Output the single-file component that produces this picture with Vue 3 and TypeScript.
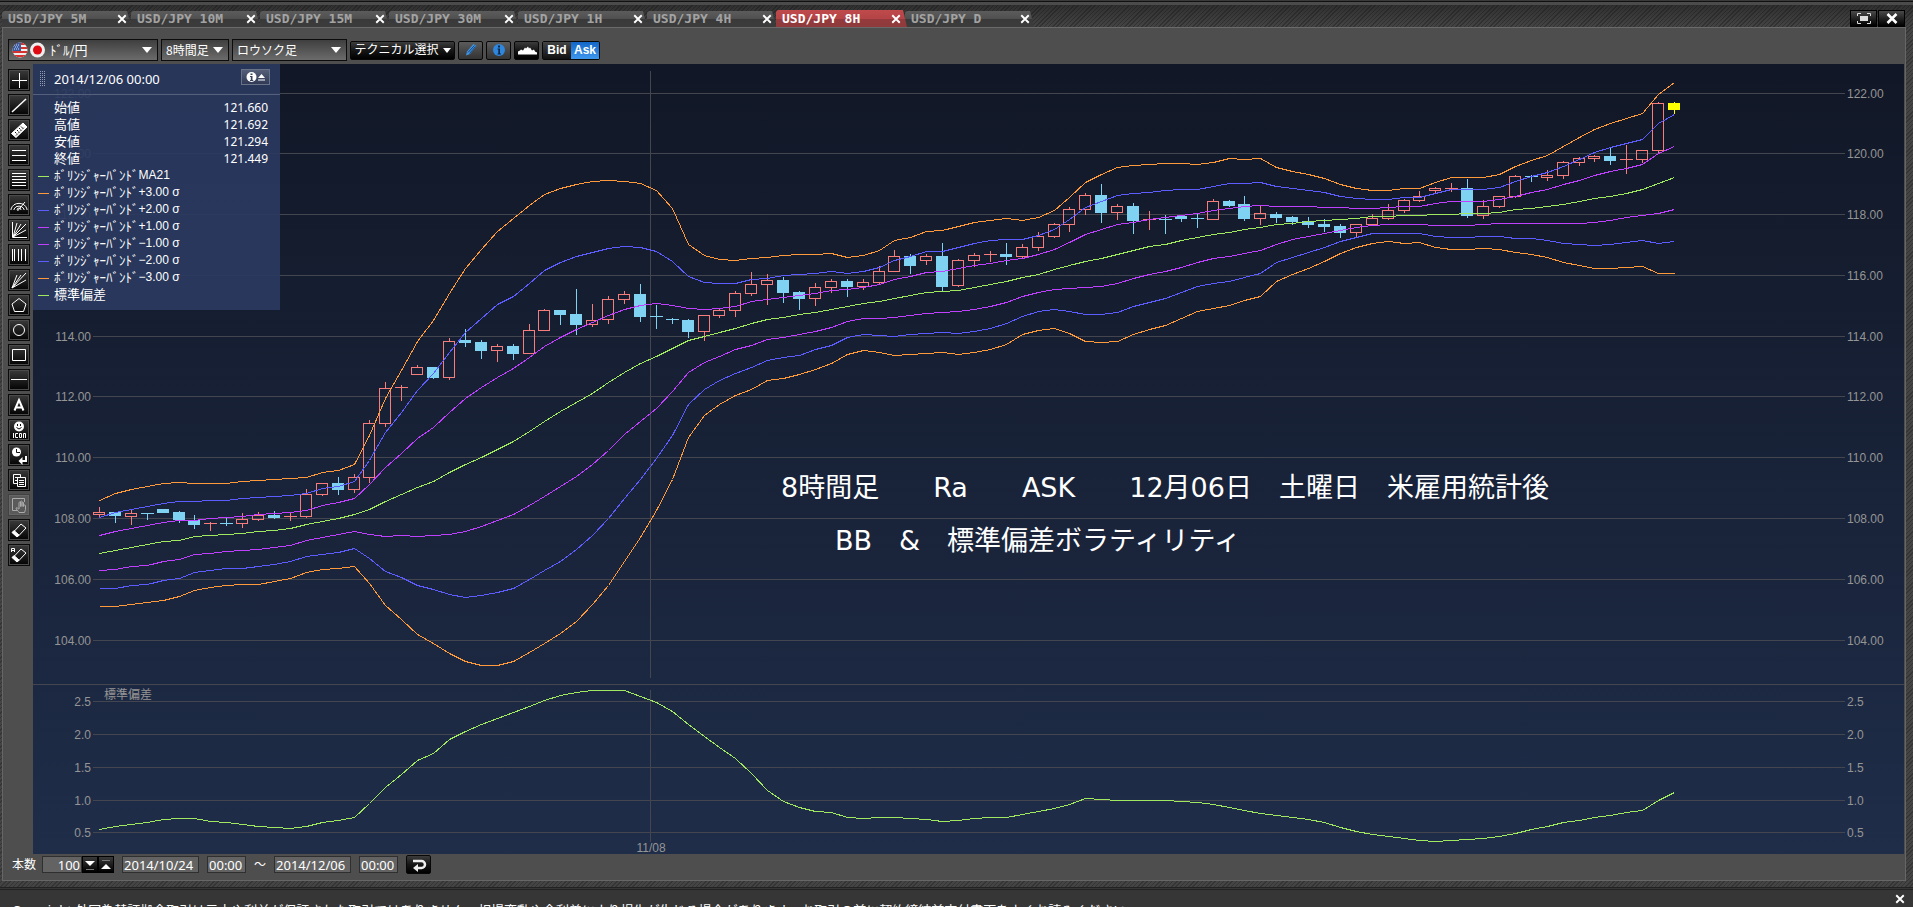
<script setup lang="ts">
import { computed, onBeforeUnmount, onMounted, ref } from 'vue'

type Kind = 'up' | 'down' | 'live'
type Bar = [Kind, number, number, number, number]

const tabs = ['5M', '10M', '15M', '30M', '1H', '4H', '8H', 'D']
const active = ref('8H')

const barCount = ref('100')
const fromDate = ref('2014/10/24')
const fromTime = ref('00:00')
const toDate = ref('2014/12/06')
const toTime = ref('00:00')

const quotes = [
  { name: '始値', value: '121.660' },
  { name: '高値', value: '121.692' },
  { name: '安値', value: '121.294' },
  { name: '終値', value: '121.449' },
]
const band = 'ﾎﾞﾘﾝｼﾞｬｰﾊﾞﾝﾄﾞ'
const legend = [
  { name: band, param: 'MA21', tone: 'green' },
  { name: band, param: '+3.00 σ', tone: 'orange' },
  { name: band, param: '+2.00 σ', tone: 'blue' },
  { name: band, param: '+1.00 σ', tone: 'purple' },
  { name: band, param: '−1.00 σ', tone: 'purple' },
  { name: band, param: '−2.00 σ', tone: 'blue' },
  { name: band, param: '−3.00 σ', tone: 'orange' },
  { name: '標準偏差', param: '', tone: 'green' },
]

const tools = [
  { id: 'cross', label: '十字線' }, { id: 'trend', label: 'トレンドライン' }, { id: 'ruler', label: '定規' },
  { id: 'three', label: '平行線' }, { id: 'five', label: 'リトレースメント' }, { id: 'arc', label: 'アーク' },
  { id: 'fan', label: 'ギャンファン' }, { id: 'vert', label: 'タイムゾーン' }, { id: 'rays', label: 'ファン' },
  { id: 'penta', label: '五角形' }, { id: 'circle', label: '円' }, { id: 'rect', label: '四角形' },
  { id: 'hline', label: '水平線' }, { id: 'text', label: 'テキスト' }, { id: 'icon', label: 'アイコン' },
  { id: 'clock', label: '時間' }, { id: 'copy', label: 'コピー' }, { id: 'hand', label: '移動' },
  { id: 'erase', label: '消去' }, { id: 'eraseAll', label: 'すべて消去' },
]

/* kind, body top, body bottom, high, low */
const bars: Bar[] = [
  ['up', 512, 515, 507, 517], ['down', 512, 516, 512, 523], ['up', 513, 517, 509, 525], ['down', 513, 514, 513, 520],
  ['down', 509, 513, 509, 513], ['down', 512, 520, 511, 523], ['down', 520, 525, 515, 529], ['up', 523, 524, 522, 531],
  ['down', 523, 524, 518, 526], ['up', 519, 524, 513, 528], ['up', 515, 520, 512, 521], ['down', 515, 518, 511, 519],
  ['up', 516, 517, 513, 521], ['up', 494, 517, 489, 518], ['up', 483, 495, 483, 496], ['down', 483, 490, 477, 495],
  ['up', 477, 490, 474, 493], ['up', 423, 478, 420, 483], ['up', 388, 424, 382, 427], ['up', 387, 388, 385, 401],
  ['up', 367, 375, 365, 375], ['down', 367, 378, 367, 379], ['up', 341, 378, 338, 380], ['down', 340, 343, 329, 347],
  ['down', 342, 351, 340, 359], ['up', 346, 351, 344, 362], ['down', 346, 354, 344, 360], ['up', 330, 354, 324, 354],
  ['up', 310, 331, 309, 331], ['down', 310, 315, 310, 325], ['down', 314, 325, 289, 335], ['up', 320, 325, 304, 327],
  ['up', 299, 320, 296, 324], ['up', 294, 300, 291, 304], ['down', 294, 317, 284, 322], ['down', 316, 317, 305, 329],
  ['down', 319, 320, 318, 324], ['down', 320, 332, 319, 338], ['up', 315, 332, 315, 341], ['up', 310, 316, 308, 318],
  ['up', 293, 311, 291, 317], ['up', 284, 294, 272, 296], ['up', 280, 285, 274, 305], ['down', 280, 293, 277, 303],
  ['down', 292, 299, 291, 310], ['up', 287, 299, 283, 306], ['up', 281, 288, 279, 293], ['down', 281, 287, 279, 297],
  ['up', 282, 287, 279, 290], ['up', 271, 283, 266, 284], ['up', 256, 272, 250, 272], ['down', 256, 266, 254, 274],
  ['up', 256, 261, 254, 265], ['down', 256, 287, 243, 291], ['up', 260, 286, 259, 287], ['up', 255, 261, 253, 267],
  ['up', 254, 255, 251, 262], ['down', 254, 257, 243, 265], ['up', 247, 257, 244, 258], ['up', 236, 248, 232, 251],
  ['up', 224, 237, 223, 238], ['up', 209, 225, 207, 232], ['up', 195, 210, 193, 215], ['down', 195, 213, 184, 223],
  ['up', 206, 213, 204, 220], ['down', 206, 221, 203, 234], ['up', 219, 220, 211, 230], ['down', 219, 220, 215, 234],
  ['down', 216, 219, 216, 222], ['down', 218, 219, 214, 228], ['up', 201, 220, 199, 220], ['down', 201, 206, 200, 207],
  ['down', 204, 219, 196, 221], ['up', 213, 219, 205, 225], ['down', 214, 218, 212, 223], ['down', 217, 222, 216, 225],
  ['down', 221, 225, 217, 228], ['down', 224, 227, 219, 232], ['down', 226, 233, 224, 238], ['up', 224, 233, 224, 238],
  ['up', 218, 225, 214, 225], ['up', 210, 219, 204, 220], ['up', 200, 211, 199, 213], ['up', 196, 201, 191, 202],
  ['up', 188, 191, 187, 193], ['up', 188, 189, 183, 192], ['down', 188, 216, 179, 218], ['up', 206, 216, 200, 219],
  ['up', 196, 207, 196, 208], ['up', 176, 197, 175, 198], ['down', 176, 177, 175, 182], ['up', 175, 178, 170, 181],
  ['up', 162, 176, 161, 179], ['up', 158, 163, 157, 166], ['up', 156, 159, 155, 162], ['down', 156, 161, 148, 165],
  ['up', 159, 160, 145, 174], ['up', 150, 160, 150, 163], ['up', 103, 151, 102, 153], ['live', 103, 110, 102, 114],
]

const series: { tone: string; ys: number[] }[] = [
  { tone: 'orange', ys: [
    500, 493, 489, 486, 483, 482, 483, 483, 483, 481, 480, 479, 478, 477, 472, 470, 464, 435, 398, 370, 341, 320, 293, 268, 249,
    231, 218, 205, 194, 188, 184, 181, 180, 181, 183, 190, 208, 244, 255, 259, 260, 258, 257, 255, 254, 254, 253, 257, 255, 250,
    240, 237, 231, 230, 226, 222, 220, 218, 220, 217, 210, 197, 182, 174, 167, 165, 164, 163, 163, 164, 162, 158, 159, 158, 167,
    171, 174, 178, 184, 188, 190, 190, 188, 188, 182, 177, 177, 177, 174, 166, 160, 155, 146, 137, 129, 123, 118, 113, 94, 82] },
  { tone: 'blue', ys: [
    517, 512, 509, 506, 503, 501, 501, 500, 500, 498, 497, 496, 495, 493, 488, 486, 481, 460, 432, 412, 390, 373, 352, 332, 318,
    304, 296, 283, 270, 262, 256, 252, 248, 246, 247, 251, 261, 276, 282, 283, 283, 279, 278, 275, 274, 273, 271, 273, 271, 267,
    260, 256, 251, 251, 247, 243, 240, 239, 239, 235, 229, 219, 207, 201, 195, 193, 192, 190, 189, 189, 186, 183, 183, 182, 186,
    188, 190, 192, 196, 198, 199, 199, 197, 197, 193, 189, 189, 189, 187, 181, 176, 172, 166, 159, 152, 147, 143, 139, 123, 114] },
  { tone: 'purple', ys: [
    535, 531, 528, 525, 522, 520, 520, 518, 517, 516, 514, 513, 512, 510, 505, 502, 498, 484, 467, 453, 438, 427, 412, 398, 387,
    377, 368, 357, 346, 337, 329, 322, 315, 309, 305, 303, 305, 308, 309, 308, 306, 301, 299, 297, 295, 293, 290, 289, 287, 284,
    279, 276, 272, 271, 268, 265, 263, 260, 258, 254, 249, 242, 234, 229, 224, 222, 219, 217, 215, 213, 210, 208, 206, 205, 206,
    206, 206, 207, 207, 208, 208, 207, 206, 206, 203, 201, 201, 201, 199, 196, 192, 189, 184, 180, 175, 171, 168, 164, 153, 146] },
  { tone: 'green', ys: [
    553, 550, 547, 544, 541, 540, 536, 535, 534, 533, 531, 530, 528, 524, 521, 518, 514, 509, 501, 494, 487, 481, 472, 464, 457,
    449, 441, 431, 421, 411, 402, 393, 382, 372, 363, 356, 348, 340, 336, 332, 328, 323, 319, 317, 314, 312, 309, 306, 303, 301,
    298, 295, 292, 291, 290, 287, 284, 281, 277, 274, 269, 265, 261, 258, 254, 250, 246, 244, 240, 237, 234, 232, 229, 227, 224,
    223, 221, 220, 219, 218, 216, 216, 215, 215, 214, 214, 213, 213, 212, 209, 208, 206, 204, 201, 198, 196, 193, 189, 183, 177] },
  { tone: 'purple', ys: [
    570, 569, 566, 565, 561, 559, 554, 553, 551, 550, 549, 547, 545, 540, 537, 534, 531, 534, 536, 535, 536, 535, 534, 531, 526,
    520, 514, 505, 496, 486, 476, 464, 450, 434, 421, 408, 391, 372, 362, 356, 349, 345, 339, 337, 334, 331, 327, 321, 318, 318,
    317, 315, 313, 312, 311, 309, 306, 302, 296, 292, 289, 288, 287, 286, 283, 278, 274, 271, 267, 262, 258, 256, 253, 250, 244,
    239, 236, 233, 230, 227, 225, 224, 224, 224, 225, 225, 225, 224, 223, 223, 223, 223, 223, 223, 222, 220, 217, 215, 213, 209] },
  { tone: 'blue', ys: [
    588, 588, 585, 584, 580, 578, 572, 570, 568, 568, 566, 564, 561, 556, 554, 552, 548, 558, 571, 577, 585, 589, 594, 597, 595,
    592, 588, 579, 570, 561, 549, 535, 518, 498, 479, 458, 435, 404, 389, 380, 373, 367, 360, 357, 355, 349, 345, 337, 334, 335,
    336, 334, 333, 332, 333, 331, 328, 323, 316, 311, 309, 311, 314, 314, 312, 306, 302, 298, 292, 286, 283, 281, 277, 273, 262,
    257, 252, 247, 241, 237, 233, 233, 233, 233, 236, 237, 237, 236, 236, 238, 238, 240, 243, 244, 245, 244, 242, 240, 243, 241] },
  { tone: 'orange', ys: [
    606, 606, 604, 602, 600, 596, 590, 587, 585, 584, 584, 581, 578, 572, 569, 568, 566, 583, 605, 619, 634, 643, 653, 661, 665,
    665, 661, 652, 643, 633, 621, 604, 585, 561, 537, 510, 479, 437, 415, 404, 395, 389, 380, 378, 374, 369, 363, 354, 350, 352,
    355, 354, 353, 352, 354, 352, 349, 344, 334, 330, 328, 333, 341, 342, 341, 334, 329, 325, 318, 311, 308, 305, 300, 296, 281,
    274, 268, 261, 253, 247, 243, 241, 243, 242, 247, 249, 249, 248, 249, 252, 254, 257, 262, 265, 268, 268, 267, 266, 273, 273] },
  { tone: 'green', ys: [
    829, 826, 824, 822, 819, 818, 818, 821, 822, 824, 826, 827, 828, 826, 822, 820, 817, 803, 787, 774, 760, 753, 739, 731, 724,
    718, 712, 706, 700, 695, 692, 690, 690, 690, 696, 702, 711, 724, 736, 747, 758, 773, 790, 801, 807, 811, 812, 817, 818, 817,
    817, 818, 819, 821, 820, 818, 817, 817, 814, 811, 808, 804, 798, 799, 800, 800, 800, 800, 801, 802, 804, 807, 810, 813, 815,
    817, 819, 822, 827, 831, 834, 836, 838, 840, 841, 840, 839, 838, 836, 833, 829, 826, 822, 820, 817, 815, 812, 810, 800, 792] },
]

const priceLevels = [
  { text: '122.00', y: 93 }, { text: '120.00', y: 153 }, { text: '118.00', y: 214 }, { text: '116.00', y: 275 },
  { text: '114.00', y: 336 }, { text: '112.00', y: 396 }, { text: '110.00', y: 457 }, { text: '108.00', y: 518 },
  { text: '106.00', y: 579 }, { text: '104.00', y: 640 },
]
const deviationLevels = [
  { text: '2.5', y: 701 }, { text: '2.0', y: 734 }, { text: '1.5', y: 767 }, { text: '1.0', y: 800 }, { text: '0.5', y: 832 },
]
const levels = [...priceLevels, ...deviationLevels]

const chartLeft = 33
const chartTop = 64
const chartHeight = 790
const firstBar = 99
const chartBox = ref<HTMLElement | null>(null)
const chartWidth = ref(1871)
const axisX = computed(() => chartLeft + chartWidth.value - 59)
const step = computed(() => (axisX.value - firstBar - 171) / (bars.length - 1))
const barX = (i: number) => Math.round(firstBar + i * step.value)
const dayLine = computed(() => barX(34.64))
const points = (ys: number[]) => ys.map((y, i) => `${barX(i) + 0.5},${y + 0.5}`).join(' ')

let observer: ResizeObserver | undefined
onMounted(() => {
  observer = new ResizeObserver(([entry]) => {
    chartWidth.value = Math.round(entry.contentRect.width)
  })
  if (chartBox.value) observer.observe(chartBox.value)
})
onBeforeUnmount(() => observer?.disconnect())
</script>

<template>
  <div class="app">
    <header class="strip">
      <nav class="tabs">
        <div v-for="t in tabs" :key="t" class="tab" :class="{ on: t === active }">
          <button class="tab-name" type="button" @click="active = t">USD/JPY {{ t }}</button>
          <button class="tab-close" type="button" :aria-label="`USD/JPY ${t} を閉じる`">
            <svg viewBox="0 0 8 8"><path d="M1 1 7 7M7 1 1 7" /></svg>
          </button>
        </div>
      </nav>
      <div class="win">
        <button type="button" aria-label="最大化">
          <svg viewBox="0 0 14 11"><path d="M.5 3V.5H4M10 .5h3.5V3M13.5 8v2.500H10M4 10.500H.5V8" fill="none" stroke="#ddd" /><path d="M3 3h8v5H3z" fill="#ddd" /></svg>
        </button>
        <button type="button" aria-label="閉じる">
          <svg viewBox="0 0 14 11"><path d="M2.500 1 11.500 10M11.500 1 2.500 10" stroke="#fff" stroke-width="2.600" /></svg>
        </button>
      </div>
    </header>

    <main class="frame">
      <div class="bar">
        <label class="pick pair">
          <svg class="flags" viewBox="0 0 34 16" aria-hidden="true">
            <defs><clipPath id="disc"><circle cx="8" cy="8" r="7.500" /></clipPath></defs>
            <g clip-path="url(#disc)">
              <path d="M0 0h16v16H0z" fill="#f0eeee" />
              <path d="M0 1h16v2H0zM0 5h16v2H0zM0 9h16v2H0zM0 13h16v2H0z" fill="#d8322f" />
              <path d="M0 0h9v9H0z" fill="#3a5c9f" />
              <path d="M2 3h1M4 3h1M6 3h1M3 5h1M5 5h1M2 7h1M4 7h1M6 7h1" stroke="#cfd8ee" />
            </g>
            <circle cx="25.500" cy="8" r="7.500" fill="#eee" />
            <circle cx="25.500" cy="8" r="4.500" fill="#e00a12" />
          </svg>
          <select aria-label="通貨ペア"><option>ﾄﾞﾙ/円</option></select>
        </label>
        <label class="pick span"><select aria-label="足種"><option>8時間足</option></select></label>
        <label class="pick style"><select aria-label="チャート種類"><option>ロウソク足</option></select></label>
        <button class="dark tech" type="button">テクニカル選択<i class="arrow"></i></button>
        <button class="dark grey" type="button" aria-label="描画">
          <svg viewBox="0 0 16 16"><path d="M3 13.500 4 9.500 10.500 2l3 2L7 12z" fill="#3f96e6" /><path d="M5 10.500l6.500-7M6.500 11.500l6-7" stroke="#15457c" /></svg>
        </button>
        <button class="dark grey" type="button" aria-label="情報">
          <svg viewBox="0 0 16 16"><circle cx="8" cy="8" r="6" fill="#2f86dd" /><path d="M7 3.500h2v2H7zM6.500 6.500H9v5h1v1H6.500v-1h.8v-4h-.8z" fill="#10294a" /></svg>
        </button>
        <button class="dark" type="button" aria-label="エリア表示">
          <svg class="wide" viewBox="0 0 20 16"><path d="M1 12.500V9.500l2-1 1-1 2 1 2-3 1 1 2-2 1 2 1-1 2 3 2-1 1 2 2 1v2z" fill="#fff" /></svg>
        </button>
        <div class="side">
          <button type="button">Bid</button><button class="sel" type="button">Ask</button>
        </div>
      </div>

      <div class="work">
        <aside class="tools">
          <button v-for="t in tools" :key="t.id" type="button" :class="{ off: t.id === 'hand' }" :aria-label="t.label">
            <svg viewBox="0 0 22 22">
              <path v-if="t.id === 'cross'" d="M4 11.500h15M11.500 4v15" />
              <path v-else-if="t.id === 'trend'" d="M4 18 18 5" stroke-width="1.500" />
              <g v-else-if="t.id === 'ruler'">
                <path d="M3.500 14.500 15 4l4 4L8 18.500z" fill="#fff" />
                <path d="M7 13l1.500 1.500M9 11l1.500 1.500M11 9l1.500 1.500M13 7.500l1.500 1.500M8 16.500l8-8" stroke="#111" stroke-dasharray="2 1" />
              </g>
              <path v-else-if="t.id === 'three'" d="M4 6.500h14M4 11.500h14M4 16.500h14" />
              <path v-else-if="t.id === 'five'" d="M4 4.500h14M4 7.500h14M4 10.500h14M4 13.500h14M4 16.500h14" />
              <path v-else-if="t.id === 'arc'" d="M3 16v-1a8.500 8.500 0 0 1 16 0v1M6 16v-1a5.500 5 0 0 1 10 0v1M9 16a2 2 0 0 1 4 0M9.500 17 17 8" />
              <path v-else-if="t.id === 'fan'" d="M4.500 3v15.500H19M5 18 9 4M5 18l8-13M5 18 18 5M5 18l13-7" />
              <path v-else-if="t.id === 'vert'" d="M4.500 5v12M6.500 5v12M10.500 5v12M13.500 5v12M17.500 5v12" />
              <path v-else-if="t.id === 'rays'" d="M4 19 9 6M4 19 13 6M4 19 18 4M4 19l14-8" />
              <path v-else-if="t.id === 'penta'" d="M11 4.500 18 10l-2.500 7.500h-9L4 10z" />
              <circle v-else-if="t.id === 'circle'" cx="11" cy="11" r="5.500" />
              <path v-else-if="t.id === 'rect'" d="M4.500 5.500h13v11h-13z" />
              <path v-else-if="t.id === 'hline'" d="M3 10.500h16" />
              <path v-else-if="t.id === 'text'" d="M6.500 16.500 11 6l4.500 10.500M8 13.500h6" stroke-width="2" />
              <g v-else-if="t.id === 'icon'">
                <circle cx="11" cy="7.500" r="5" fill="#fff" stroke="none" />
                <path d="M9.500 5v2M12.500 5v2M8.500 8.500q2.500 3 5 0" stroke="#111" />
                <path d="M5.500 14v5M10 14.500H7.500v4H10M11.500 14.500h2v4h-2zM15.500 19v-4.500h2V19" />
              </g>
              <g v-else-if="t.id === 'clock'">
                <circle cx="8.500" cy="8" r="4.500" fill="#fff" stroke="none" />
                <path d="M8.500 5v3.500H12" stroke="#111" />
                <path d="M18 12v5h-5" stroke-width="2" /><path d="m14.500 13-4 4 4 4z" fill="#fff" stroke="none" />
              </g>
              <g v-else-if="t.id === 'copy'">
                <path d="M9 14.500H5.500v-9h7V9M7 8.500h4M7 11.500h2" /><path d="M9.500 8.500h8v9h-8zM11 11.500h5M11 13.500h5M11 15.500h5" />
              </g>
              <g v-else-if="t.id === 'hand'">
                <path d="M9 16.500H4.500v-12h12V8" /><path d="M11 18.500c-1-2-3-3-3-4.500 1-1 2 1 3 1V8.500q1-1 1.500 0v4-5q1-1 1.500 0v5-4q1-1 1.500 0v4q1-3 2-1v4l-1 3z" />
              </g>
              <g v-else>
                <path d="M5 13.500 13 5l5 4-8 8.500z" /><path d="M4 13.500 6 11.500l5 4.500-2 2z" fill="#fff" />
                <path v-if="t.id === 'eraseAll'" d="M3.500 8V4.500h3V8M3.500 6.500h3" />
              </g>
            </svg>
          </button>
        </aside>

        <section ref="chartBox" class="chart">
          <svg class="plot" :viewBox="`${chartLeft} ${chartTop} ${chartWidth} ${chartHeight}`">
            <g class="grid">
              <path v-for="l in levels" :key="l.text" :d="`M93 ${l.y + 0.5}H${axisX}`" />
              <path :d="`M${chartLeft} 684.500H${chartLeft + chartWidth}`" />
              <path :d="`M${dayLine + 0.5} 71V678M${dayLine + 0.5} 690V842`" />
            </g>
            <g class="axis">
              <template v-for="l in levels" :key="l.text">
                <text x="91" :y="l.y + 5" text-anchor="end">{{ l.text }}</text>
                <text :x="axisX + 2" :y="l.y + 5">{{ l.text }}</text>
              </template>
              <text :x="dayLine + 1" y="852" text-anchor="middle">11/08</text>
              <text class="jp" x="104" y="699">標準偏差</text>
            </g>
            <g class="note">
              <text x="781" y="497">8時間足　　Ra　　ASK　　12月06日　土曜日　米雇用統計後</text>
              <text x="835" y="550">BB　&amp;　標準偏差ボラティリティ</text>
            </g>
            <g v-for="(b, i) in bars" :key="i" :class="b[0]">
              <rect class="wick" :x="barX(i)" :y="b[3]" width="1" :height="b[1] - b[3]" />
              <rect class="wick" :x="barX(i)" :y="b[2]" width="1" :height="b[4] - b[2]" />
              <rect v-if="b[2] - b[1] === 1" class="wick" :x="barX(i) - 6" :y="b[1]" width="13" height="1" />
              <rect v-else-if="b[0] === 'up'" class="hollow" :x="barX(i) - 5.5" :y="b[1] + 0.5" width="11" :height="b[2] - b[1] - 1" />
              <rect v-else class="wick" :x="barX(i) - 6" :y="b[1]" width="12" :height="b[2] - b[1]" />
            </g>
            <polyline v-for="(s, i) in series" :key="i" class="curve" :class="s.tone" :points="points(s.ys)" />
          </svg>

          <div class="panel">
            <div class="panel-head">
              <span class="grip"></span>
              <time>2014/12/06 00:00</time>
              <button type="button" aria-label="情報を折りたたむ">
                <svg viewBox="0 0 20 12"><circle cx="5.500" cy="6" r="5" fill="#fff" /><path d="M4.500 2.500h2V4h-2zM4 5h2.500v4h.8v1H4V9h.8V6H4z" fill="#39435f" /><path d="m12 7 3.500-4L19 7zM12 8.500h7v1h-7z" fill="#fff" /></svg>
              </button>
            </div>
            <dl>
              <div v-for="q in quotes" :key="q.name" class="line"><dt>{{ q.name }}</dt><dd>{{ q.value }}</dd></div>
            </dl>
            <ul>
              <li v-for="l in legend" :key="l.param" class="line"><i :class="l.tone"></i>{{ l.name }}<span>{{ l.param }}</span></li>
            </ul>
          </div>
        </section>
      </div>

      <form class="range" @submit.prevent>
        <label for="count">本数</label>
        <div class="count">
          <input id="count" v-model="barCount" />
          <button type="button" aria-label="減らす"><svg viewBox="0 0 10 10"><path d="M0 1h10L5 6z" fill="#fff" /><path d="M1 9.500h8" stroke="#777" /></svg></button>
          <button type="button" aria-label="増やす"><svg viewBox="0 0 10 10"><path d="M0 9h10L5 4z" fill="#fff" /><path d="M1 .5h8" stroke="#777" /></svg></button>
        </div>
        <input v-model="fromDate" class="date" aria-label="開始日" />
        <input v-model="fromTime" class="time" aria-label="開始時刻" />
        <span class="tilde">～</span>
        <input v-model="toDate" class="date" aria-label="終了日" />
        <input v-model="toTime" class="time" aria-label="終了時刻" />
        <button class="dark apply" type="submit" aria-label="適用">
          <svg viewBox="0 0 16 14"><path d="M2 3h8.500a3 3 0 0 1 0 7H6" fill="none" stroke="#eee" stroke-width="2.500" /><path d="M7 6v8l-5-4z" fill="#eee" /></svg>
        </button>
      </form>
    </main>

    <footer class="foot">
      <p>Copyright 外国為替証拠金取引は元本や利益が保証された取引ではありません。相場変動や金利差により損失が生じる場合があります。お取引の前に契約締結前交付書面をよくお読みください。</p>
      <button type="button" aria-label="閉じる"><svg viewBox="0 0 8 8"><path d="M1 1 7 7M7 1 1 7" /></svg></button>
    </footer>
  </div>
</template>

<style>
body {
  margin: 0;
  background: #363636;
}
</style>

<style scoped>
.app {
  height: 100vh;
  overflow: hidden;
  display: flex;
  flex-direction: column;
  box-sizing: border-box;
  background: repeating-linear-gradient(135deg, #353535 0 1px, #444 1px 3px);
  color: #fff;
  font: 12px/1 "Noto Sans", "Noto Sans CJK JP", sans-serif;
}
* {
  box-sizing: border-box;
}
button {
  padding: 0;
  border: 0;
  background: none;
  color: inherit;
  font: inherit;
}
svg {
  display: block;
}
.strip {
  flex: none;
  display: flex;
  justify-content: space-between;
  align-items: flex-end;
  height: 27px;
  padding: 0 8px 0 2px;
  border-top: 1px solid #3a3a3a;
  background:
    linear-gradient(#111 0 1px, #4b4b4b 1px 4px, transparent 4px),
    linear-gradient(rgba(20, 20, 20, .5), transparent),
    repeating-linear-gradient(135deg, #333 0 1px, #444 1px 3px);
}
.tabs {
  display: flex;
}
.tab {
  position: relative;
  display: flex;
  align-items: center;
  width: 129px;
  height: 16px;
  margin-top: 1px;
  padding-left: 6px;
  color: #a3a3a3;
  background: linear-gradient(#5c5c5c, #4f4f4f 50%, #393939 50%, #3c3c3c);
  border-radius: 3px 0 0 0;
  clip-path: polygon(0 0, calc(100% - 4px) 0, 100% 100%, 0 100%);
}
.tab.on {
  width: 131px;
  height: 17px;
  margin: 0 -2px 0 0;
  color: #fff;
  background: linear-gradient(#c04a4c, #b44446 50%, #963a3c 50%, #8e3a3c);
  z-index: 1;
}
.tab-name {
  font: bold 13px/16px "DejaVu Sans Mono", monospace;
  white-space: pre;
}
.tab-close {
  position: absolute;
  right: 4px;
  top: 3px;
  width: 10px;
  height: 10px;
}
.on .tab-close {
  right: 6px;
  top: 4px;
}
.tab-close svg,
.foot svg {
  width: 10px;
  height: 10px;
  stroke: #fff;
  stroke-width: 1.5;
}
.win {
  display: flex;
  gap: 1px;
}
.win button {
  display: grid;
  place-items: center;
  width: 27px;
  height: 17px;
  border: 1px solid #000;
  background: linear-gradient(#4a4a4a, #1b1b1b 60%, #000);
}
.win svg {
  width: 14px;
  height: 11px;
}
.frame {
  flex: none;
  display: flex;
  flex-direction: column;
  margin: 0 7px 0 2px;
  border: 1px solid #666;
  border-top-color: #6a6a6a;
  background: #4e4e4e;
}
.bar {
  display: flex;
  align-items: center;
  gap: 3px;
  height: 36px;
  padding: 8px 5px 0;
}
.pick {
  position: relative;
  height: 22px;
  border: 1px solid #0c0c0c;
  background: linear-gradient(#3f3f3f, #6b6b6b);
}
.pick::after,
.arrow {
  content: "";
  border: 5px solid transparent;
  border-top: 6px solid #fff;
  border-bottom: 0;
}
.pick::after {
  position: absolute;
  right: 5px;
  top: 7px;
  pointer-events: none;
}
.pick select {
  width: 100%;
  height: 20px;
  padding: 0 16px 0 4px;
  border: 0;
  appearance: none;
  background: none;
  color: #fff;
  font: 13px/20px "Noto Sans CJK JP", sans-serif;
}
.pick.pair {
  display: flex;
  align-items: center;
  width: 150px;
  padding-left: 3px;
}
.flags {
  flex: none;
  width: 34px;
  height: 16px;
}
.pick.span {
  width: 68px;
}
.pick.span select,
.pick.style select {
  padding-right: 0;
  font-size: 12px;
}
.pick.style {
  width: 115px;
}
.dark {
  display: flex;
  align-items: center;
  justify-content: center;
  width: 25px;
  height: 19px;
  border: 1px solid #080808;
  border-radius: 2px;
  background: linear-gradient(#3c3c3c, #161616 50%, #000);
}
.dark svg {
  width: 16px;
  height: 16px;
}
.dark svg.wide {
  width: 20px;
}
.dark.grey {
  background: linear-gradient(#5b5b5b, #333);
}
.dark.tech {
  gap: 4px;
  width: 105px;
  white-space: nowrap;
}
.arrow {
  border-width: 5px 4px 0;
}
.side {
  display: flex;
  height: 19px;
  border: 1px solid #080808;
  border-radius: 2px;
  font: bold 12px/17px "Liberation Sans", sans-serif;
}
.side button {
  width: 28px;
  background: linear-gradient(#444, #111);
}
.side .sel {
  background: linear-gradient(#1266c8, #3f98ee);
}
.work {
  display: flex;
}
.tools {
  flex: none;
  display: flex;
  flex-direction: column;
  gap: 3px;
  width: 30px;
  padding: 5px 3px 0 5px;
}
.tools button {
  width: 22px;
  height: 22px;
  background: linear-gradient(#3d3d3d, #000);
  box-shadow: inset 0 0 0 1px #0a0a0a, inset 0 0 0 2px #4a4a4a;
}
.tools .off {
  background: #5a5a5a;
  box-shadow: inset 0 0 0 1px #424242, inset 0 0 0 2px #666;
}
.tools svg {
  width: 22px;
  height: 22px;
  fill: none;
  stroke: #fff;
}
.tools .off svg {
  stroke: #aaa;
}
.chart {
  position: relative;
  flex: 1;
  min-width: 0;
  margin-right: 1px;
  background: linear-gradient(#111726, #1f2d49);
}
.plot {
  width: 100%;
  height: 790px;
}
.grid {
  fill: none;
  stroke: #43464f;
  shape-rendering: crispEdges;
}
.axis {
  fill: #959595;
  font: 12px "Liberation Sans", sans-serif;
}
.axis .jp {
  font-family: "Noto Sans CJK JP", sans-serif;
}
.note {
  fill: #fff;
  font: 27px "DejaVu Sans", "Noto Sans CJK JP", sans-serif;
}
.up {
  fill: #f77d7d;
  stroke: #f77d7d;
}
.down {
  fill: #7fd2f2;
}
.live {
  fill: #ff0;
}
.wick,
.hollow {
  shape-rendering: crispEdges;
}
.wick {
  stroke: none;
}
.hollow {
  fill: none;
}
.curve {
  fill: none;
  shape-rendering: crispEdges;
}
.curve.orange { stroke: #ff9a3c; }
.curve.blue { stroke: #5c5cff; }
.curve.purple { stroke: #c040ff; }
.curve.green { stroke: #a0e860; }
.panel {
  position: absolute;
  left: 0;
  top: 0;
  width: 247px;
  padding-bottom: 7px;
  background: rgba(42, 57, 95, .93);
  font-size: 13px;
}
.panel-head {
  display: flex;
  align-items: center;
  height: 31px;
  padding: 0 10px 0 7px;
  border-bottom: 1px solid #56607c;
}
.grip {
  width: 6px;
  height: 16px;
  margin-right: 8px;
  background: conic-gradient(from 270deg at 1px 1px, #949cb2 90deg, transparent 0) 0 0 / 2px 2px;
}
.panel-head button {
  display: grid;
  place-items: center;
  width: 29px;
  height: 16px;
  margin: 0 0 4px auto;
  border: 1px solid #6a7287;
  background: linear-gradient(#565f78, #303a56);
}
.panel-head svg {
  width: 20px;
  height: 12px;
}
.panel dl,
.panel ul {
  margin: 0;
  padding: 0;
  list-style: none;
}
.panel dl {
  padding-top: 4px;
}
.line {
  display: flex;
  align-items: center;
  height: 17px;
  padding: 0 12px 0 21px;
  line-height: 17px;
  white-space: pre;
}
.line dt {
  flex: 1;
}
.line dd {
  margin: 0;
  font-size: 12px;
}
.line span {
  font: 12px/17px "Liberation Sans", sans-serif;
}
li.line {
  padding-left: 5px;
}
.line i {
  width: 11px;
  height: 1px;
  margin: 2px 5px 0 0;
}
i.green { background: #a0e860; }
i.orange { background: #ff9a3c; }
i.blue { background: #5c5cff; }
i.purple { background: #c040ff; }
.range {
  display: flex;
  align-items: center;
  gap: 8px;
  height: 26px;
  padding: 0 9px 5px;
}
.range label {
  margin-right: -2px;
}
.range input {
  height: 17px;
  padding: 0 1px;
  border: 1px solid #2f2f2f;
  background: #636363;
  color: #fff;
  font: 13px/15px "Noto Sans", sans-serif;
}
.count {
  display: flex;
  width: 72px;
}
.count input {
  flex: 1;
  min-width: 0;
  text-align: right;
}
.count button {
  display: grid;
  place-items: center;
  width: 16px;
  height: 17px;
  border: 1px solid #000;
  background: linear-gradient(#3a3a3a, #000);
}
.count svg {
  width: 10px;
  height: 10px;
}
.range .date {
  width: 77px;
}
.range .time {
  width: 39px;
}
.tilde {
  width: 12px;
  font-size: 12px;
}
.foot {
  flex: 1;
  display: flex;
  justify-content: space-between;
  align-items: flex-start;
  min-height: 0;
  margin-top: 6px;
  padding: 0 8px 0 12px;
  border-top: 3px double #222;
  background: #363636;
}
.foot p {
  margin: 14px 0 0;
  font-size: 13px;
  white-space: nowrap;
}
.foot button {
  margin-top: 4px;
}
</style>
